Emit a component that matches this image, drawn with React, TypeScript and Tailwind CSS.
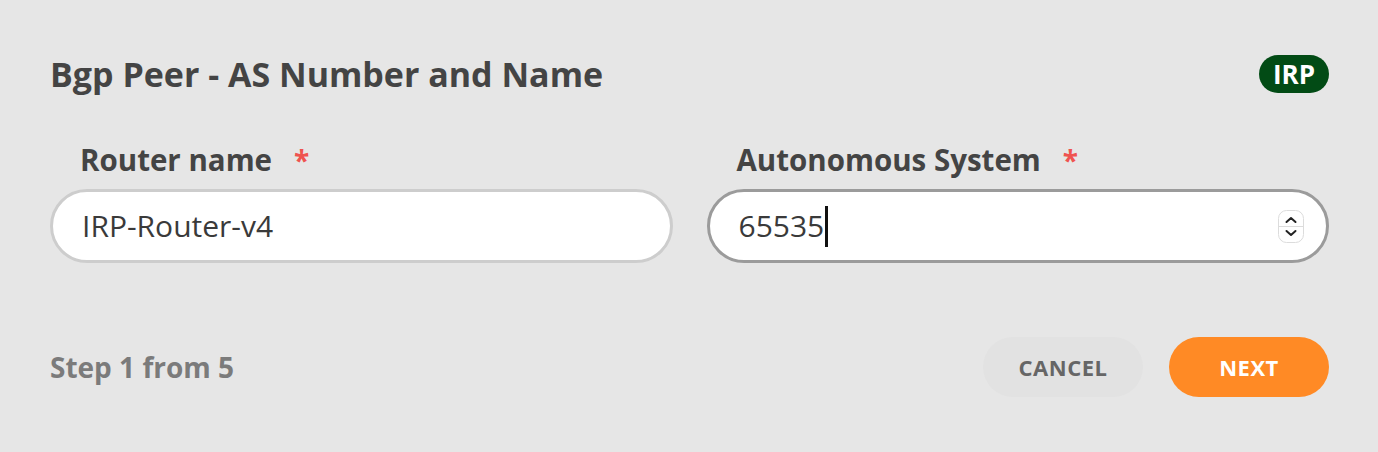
const font = "font-['Open_Sans',sans-serif]";

function Label({ text }: { text: string }) {
  return (
    <div className="flex items-center pl-[30px] h-[28px]">
      <span className="text-[29.5px] leading-none font-bold text-[#444444]">{text}</span>
      <span className="ml-[22px] text-[28px] leading-none font-bold text-[#ef5350]">*</span>
    </div>
  );
}

function Spinner() {
  return (
    <svg width="26" height="33" viewBox="0 0 26 33" className="shrink-0">
      <rect x="0.5" y="0.5" width="25" height="32" rx="8" fill="#fff" stroke="#dcdcdc" />
      <line x1="1" y1="16.5" x2="25" y2="16.5" stroke="#dcdcdc" />
      <path d="M8.5 12 L13 8 L17.5 12" fill="none" stroke="#222" strokeWidth="2" strokeLinecap="round" strokeLinejoin="round" />
      <path d="M8.5 21 L13 25 L17.5 21" fill="none" stroke="#222" strokeWidth="2" strokeLinecap="round" strokeLinejoin="round" />
    </svg>
  );
}

export default function App() {
  return (
    <div className={`w-[1378px] h-[452px] bg-[#e6e6e6] px-[49px] pt-[55px] ${font}`}>
      <div className="flex items-center justify-between h-[38px] pl-px">
        <h1 className="text-[34px] leading-none font-bold text-[#444444]">Bgp Peer - AS Number and Name</h1>
        <span className="h-[38px] w-[70px] rounded-full bg-[#024b15] text-white text-[26px] leading-none font-bold flex items-center justify-center">
          IRP
        </span>
      </div>

      <div className="grid grid-cols-2 gap-[34px] mt-[53px] pl-px">
        <div className="flex flex-col gap-[15px]">
          <Label text="Router name" />
          <div className="h-[74px] rounded-full bg-white border-[3px] border-[#cdcdcd] flex items-center pl-[29px] pr-[24px]">
            <span className="text-[30px] leading-none text-[#3a3a3a]">IRP-Router-v4</span>
          </div>
        </div>
        <div className="flex flex-col gap-[15px]">
          <Label text="Autonomous System" />
          <div className="h-[74px] rounded-full bg-white border-[3px] border-[#9b9b9b] flex items-center pl-[29px] pr-[22px]">
            <span className="text-[30px] leading-none text-[#3a3a3a]">65535</span>
            <span className="w-[3px] h-[41px] bg-[#111] ml-px" />
            <span className="flex-1" />
            <Spinner />
          </div>
        </div>
      </div>

      <div className="flex items-center justify-between mt-[74px] pl-px">
        <span className="text-[28px] leading-none font-bold text-[#7b7b7b]">Step 1 from 5</span>
        <div className="flex items-center gap-[26px]">
          <button className="h-[60px] w-[160px] rounded-full bg-[#e2e2e2] text-[#666666] text-[22px] font-bold tracking-[0.5px]">
            CANCEL
          </button>
          <button className="h-[60px] w-[160px] rounded-full bg-[#ff8a25] text-white text-[22px] font-bold tracking-[0.5px]">
            NEXT
          </button>
        </div>
      </div>
    </div>
  );
}
